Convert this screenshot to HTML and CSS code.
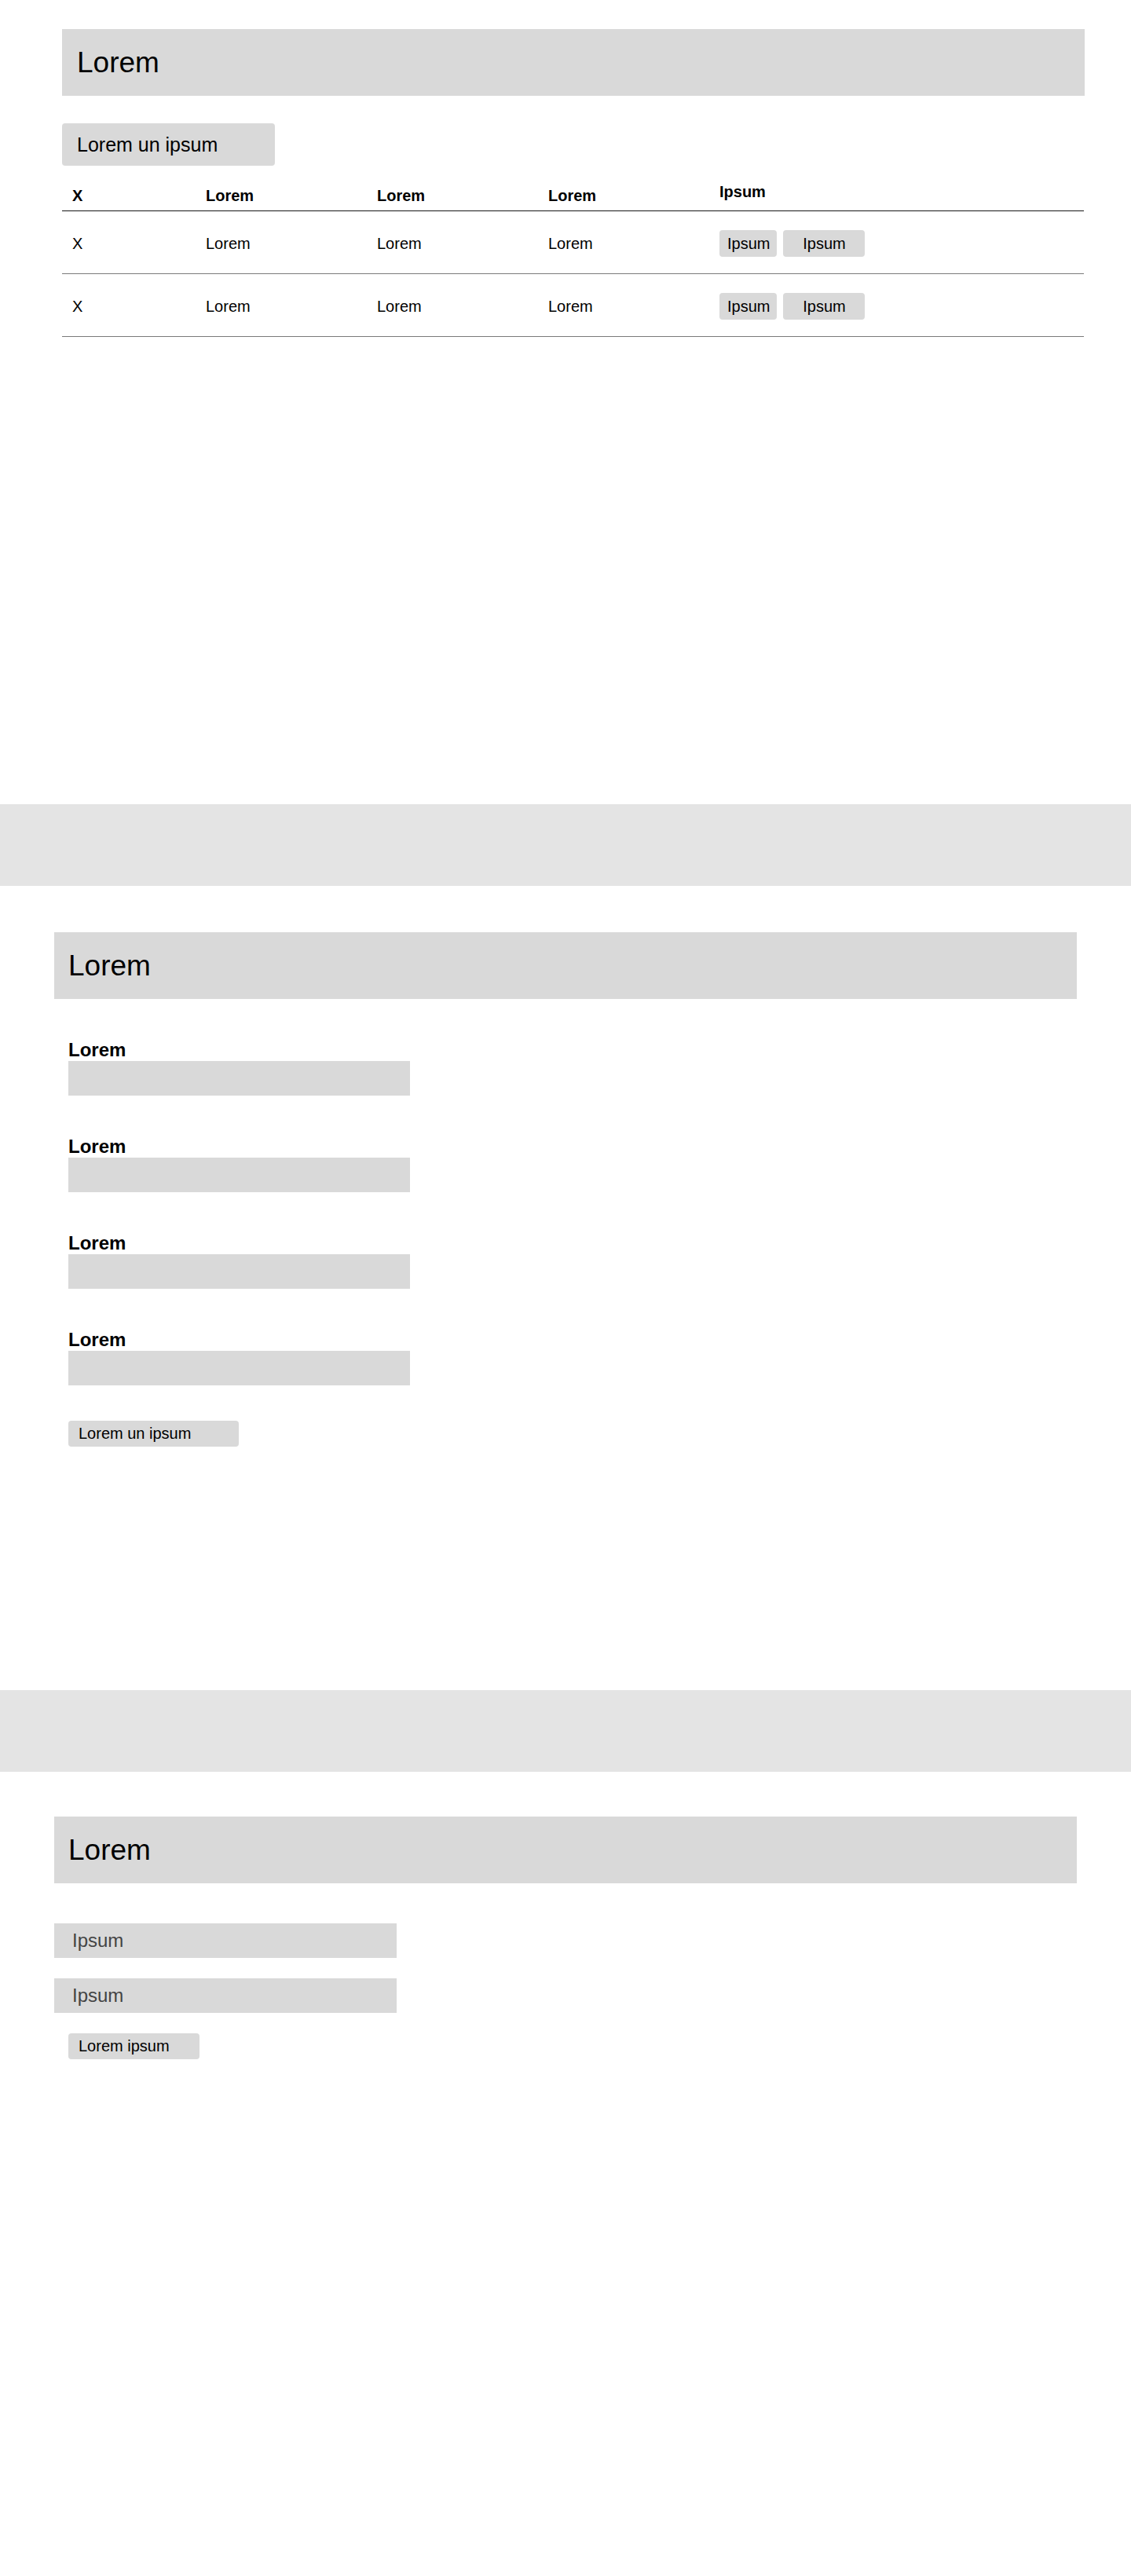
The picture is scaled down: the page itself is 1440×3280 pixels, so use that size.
FILE: index.html
```html
<!DOCTYPE html>
<html lang="en">
<head>
<meta charset="utf-8">
<title>Lorem</title>
<link rel="stylesheet" href="styles.css">
</head>
<body>
<section class="sec sec-list">
  <div class="title-box">Lorem</div>
  <button class="btn btn-lg" type="button">Lorem un ipsum</button>
  <div class="table">
    <div class="row head">
      <div class="cell">X</div>
      <div class="cell">Lorem</div>
      <div class="cell">Lorem</div>
      <div class="cell">Lorem</div>
      <div class="cell cell-actions-head">Ipsum</div>
    </div>
    <div class="row body">
      <div class="cell">X</div>
      <div class="cell">Lorem</div>
      <div class="cell">Lorem</div>
      <div class="cell">Lorem</div>
      <div class="cell actions">
        <button class="btn btn-sm" type="button">Ipsum</button>
        <button class="btn btn-sm btn-wide" type="button">Ipsum</button>
      </div>
    </div>
    <div class="row body">
      <div class="cell">X</div>
      <div class="cell">Lorem</div>
      <div class="cell">Lorem</div>
      <div class="cell">Lorem</div>
      <div class="cell actions">
        <button class="btn btn-sm" type="button">Ipsum</button>
        <button class="btn btn-sm btn-wide" type="button">Ipsum</button>
      </div>
    </div>
  </div>
</section>

<div class="band"></div>

<section class="sec sec-form">
  <div class="title-box title-box-c">Lorem</div>
  <form class="form">
    <div class="group">
      <label class="label">Lorem</label>
      <input class="field" type="text">
    </div>
    <div class="group">
      <label class="label">Lorem</label>
      <input class="field" type="text">
    </div>
    <div class="group">
      <label class="label">Lorem</label>
      <input class="field" type="text">
    </div>
    <div class="group">
      <label class="label">Lorem</label>
      <input class="field" type="text">
    </div>
    <button class="btn btn-md btn-submit" type="button">Lorem un ipsum</button>
  </form>
</section>

<div class="band"></div>

<section class="sec sec-login">
  <div class="title-box title-box-c">Lorem</div>
  <div class="login">
    <input class="field field-ph" type="text" placeholder="Ipsum">
    <input class="field field-ph" type="text" placeholder="Ipsum">
    <button class="btn btn-md btn-login" type="button">Lorem ipsum</button>
  </div>
</section>
</body>
</html>
```

FILE: styles.css
```css
* {
  box-sizing: border-box;
}

html, body {
  margin: 0;
  padding: 0;
  background: #ffffff;
}

body {
  font-family: "Liberation Sans", Arial, Helvetica, sans-serif;
  color: #000;
}

.sec {
  height: 1024px;
}

.band {
  height: 104px;
  background: #e4e4e4;
}

/* ---------- title boxes ---------- */
.title-box {
  width: 1302px;
  height: 85px;
  background: #d9d9d9;
  display: flex;
  align-items: center;
  padding-left: 19px;
  font-size: 37px;
  line-height: 43px;
}

.title-box-c {
  margin: 0 auto;
  padding-left: 18px;
}

/* ---------- buttons ---------- */
.btn {
  display: block;
  border: none;
  background: #d9d9d9;
  border-radius: 4px;
  font-family: "Liberation Sans", Arial, Helvetica, sans-serif;
  color: #000;
  text-align: left;
  padding: 0;
  margin: 0;
}

.btn-lg {
  width: 271px;
  height: 54px;
  margin-top: 35px;
  padding-left: 19px;
  font-size: 25px;
}

.btn-md {
  height: 33px;
  padding-left: 13px;
  font-size: 20px;
}

.btn-sm {
  height: 34px;
  padding: 0 9px 0 10px;
  font-size: 20px;
  text-align: center;
}

.btn-wide {
  width: 104px;
  padding: 0;
}

/* ---------- section 1: list ---------- */
.sec-list {
  padding-top: 37px;
  padding-left: 79px;
}

.table {
  width: 1301px;
}

.row {
  display: grid;
  grid-template-columns: 170px 218px 218px 218px 1fr;
}

.cell {
  padding-left: 13px;
  font-size: 20px;
  line-height: 23px;
}

.row.head {
  height: 58px;
  border-bottom: 1px solid #161616;
  align-items: end;
}

.row.head .cell {
  font-weight: bold;
  padding-bottom: 7px;
}

.row.head .cell-actions-head {
  padding-bottom: 12px;
}

.row.body {
  height: 80px;
  border-bottom: 1px solid #7a7a7a;
  align-items: center;
  padding-top: 3px;
}

.actions {
  display: flex;
  align-items: center;
  gap: 8px;
}

/* ---------- section 2: form ---------- */
.sec-form {
  padding-top: 59px;
}

.form {
  width: 1302px;
  margin: 0 auto;
  padding-left: 18px;
}

.group {
  margin-top: 51px;
}

.label {
  display: block;
  font-size: 24px;
  line-height: 28px;
  font-weight: bold;
}

.field {
  display: block;
  width: 435px;
  height: 44px;
  border: none;
  border-radius: 0;
  background: #d9d9d9;
  margin: 0;
  padding: 0;
  font-family: "Liberation Sans", Arial, Helvetica, sans-serif;
  outline: none;
}

.btn-submit {
  width: 217px;
  margin-top: 45px;
}

/* ---------- section 3: login ---------- */
.sec-login {
  padding-top: 57px;
}

.login {
  width: 1302px;
  margin: 51px auto 0;
  display: flex;
  flex-direction: column;
  align-items: flex-start;
  gap: 26px;
}

.field-ph {
  width: 436px;
  padding-left: 23px;
  font-size: 24px;
  color: #444;
}

.field-ph::placeholder {
  color: #444;
  opacity: 1;
}

.btn-login {
  width: 167px;
  margin-left: 18px;
}
```
